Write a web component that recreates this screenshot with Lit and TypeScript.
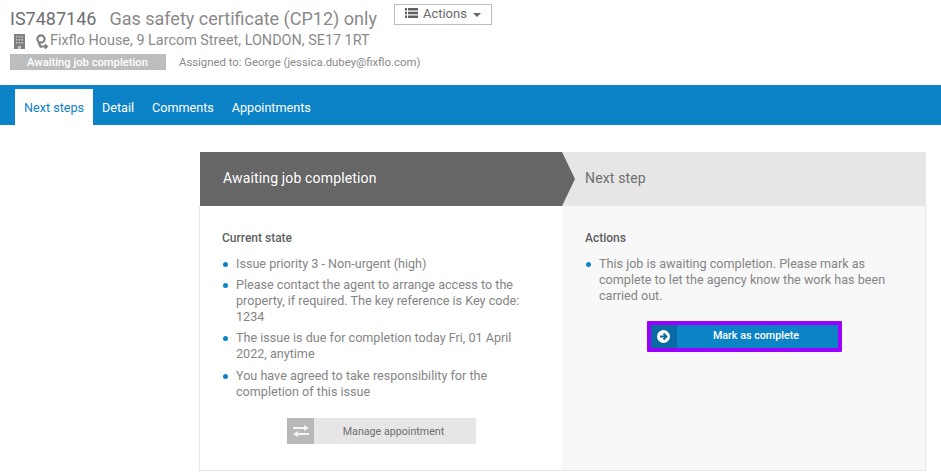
import { LitElement, html, css } from "lit";
import { customElement } from "lit/decorators.js";

@customElement("app-root")
export class AppRoot extends LitElement {
  static styles = css`
    :host { display: block; width: 941px; height: 476px; overflow: hidden; background: #fff; font-family: Roboto, sans-serif; color: #757575; }
    .head { height: 85px; padding: 8px 0 0 10px; box-sizing: border-box; }
    .title-row { display: flex; align-items: flex-start; height: 22px; }
    h1 { margin: 0; font-size: 18px; line-height: 21px; font-weight: 400; color: #8a8a8a; }
    h1 .id { color: #6f6f6f; margin-right: 13px; }
    .actions { margin: -4px 0 0 17px; width: 98px; height: 21px; box-sizing: border-box; border: 1px solid #bdbdbd; display: flex; align-items: center; justify-content: center; font-size: 13px; color: #6a6a6a; padding-bottom: 3px; }
    .actions svg { margin-right: 5px; }
    .caret { width: 0; height: 0; border: 4px solid transparent; border-top-color: #666; border-bottom: 0; margin: 3px 0 0 6px; }
    .addr { display: flex; align-items: center; font-size: 14.4px; line-height: 18px; margin-top: 2px; color: #8a8a8a; padding-left: 4px; }
    .addr .b { margin-right: 10px; }
    .status-row { display: flex; align-items: center; margin-top: 4px; }
    .badge { width: 156px; height: 16px; background: #bdbdbd; color: #fff; font-size: 11.2px; font-weight: 500; line-height: 17px; text-align: center; box-sizing: border-box; padding-right: 1px; }
    .assigned { font-size: 11.35px; color: #8a8a8a; margin-left: 13px; }
    nav { height: 40px; background: #0c82c7; padding: 4px 0 0 15px; box-sizing: border-box; display: flex; }
    nav a { color: #fff; font-size: 12.6px; line-height: 34px; padding: 2px 9px 0; box-sizing: border-box; }
    nav a.on { background: #fff; color: #0c82c7; }
    .main { padding: 27px 15px 0 199px; }
    .steps { display: flex; height: 54px; margin-left: 1px; font-size: 14px; letter-spacing: 0.15px; }
    .s1 { position: relative; width: 362px; background: #666; color: #fff; line-height: 52px; padding-left: 23px; box-sizing: border-box; }
    .s1::after { content: ""; position: absolute; left: 100%; top: 0; border-left: 13px solid #666; border-top: 27px solid transparent; border-bottom: 27px solid transparent; }
    .s2 { flex: 1; background: #e6e6e6; color: #6f6f6f; line-height: 52px; padding-left: 23px; }
    .body { display: grid; grid-template-columns: 362px 1fr; height: 265px; box-sizing: border-box; border: 1px solid #e6e6e6; border-top: 0; font-size: 12.6px; line-height: 16px; }
    .col { padding-top: 24px; box-sizing: border-box; }
    .col.l { padding-left: 22px; padding-right: 30px; }
    .col.r { background: #f8f8f8; padding-left: 23px; padding-right: 30px; }
    h3 { margin: 0 0 10px; font-size: 12px; line-height: 16px; font-weight: 500; color: #5f5f5f; }
    ul { list-style: none; margin: 0; padding: 0; }
    li { position: relative; padding-left: 14px; margin-bottom: 5.2px; color: #858585; }
    li::before { content: ""; position: absolute; left: 1px; top: 6px; width: 5px; height: 5px; border-radius: 50%; background: #0c82c7; }
    .btn { display: flex; align-items: center; box-sizing: border-box; }
    .complete { width: 195px; height: 31px; border: 4px solid #9900ff; border-radius: 1px; background: #0c82c7; color: #fff; font-size: 10.75px; font-weight: 500; margin: 17px 0 0 62px; }
    .complete .ic { width: 26px; height: 100%; box-sizing: border-box; padding: 0 1px 1px 0; background: #0a6aa3; display: flex; align-items: center; justify-content: center; }
    .complete span { flex: 1; text-align: center; padding-right: 3px; padding-bottom: 1px; }
    .manage { width: 189px; height: 26px; background: #e6e6e6; color: #6f6f6f; font-size: 10.7px; margin: 18.4px 0 0 65px; }
    .manage .ic { width: 27px; height: 100%; background: #b8b8b8; display: flex; align-items: center; justify-content: center; }
    .manage span { flex: 1; text-align: center; padding-right: 3px; padding-top: 2px; }
    svg { display: block; }
  `;

  render() {
    return html`
      <div class="head">
        <div class="title-row">
          <h1><span class="id">IS7487146</span>Gas safety certificate (CP12) only</h1>
          <div class="actions">
            <svg width="13" height="10" viewBox="0 0 13 10" fill="#5f5f5f"><rect x="0" y="0" width="2" height="2.500"/><rect x="3" y="0" width="10" height="2.500"/><rect x="0" y="3.750" width="2" height="2.500"/><rect x="3" y="3.750" width="10" height="2.500"/><rect x="0" y="7.500" width="2" height="2.500"/><rect x="3" y="7.500" width="10" height="2.500"/></svg>
            Actions<i class="caret"></i>
          </div>
        </div>
        <div class="addr">
          <svg class="b" width="11" height="15" viewBox="0 0 11 15"><rect width="11" height="15" fill="#808080"/><g fill="#c8c8c8"><rect x="2" y="2" width="1.500" height="1.500"/><rect x="4.800" y="2" width="1.500" height="1.500"/><rect x="7.500" y="2" width="1.500" height="1.500"/><rect x="2" y="5" width="1.500" height="1.500"/><rect x="4.800" y="5" width="1.500" height="1.500"/><rect x="7.500" y="5" width="1.500" height="1.500"/><rect x="2" y="8" width="1.500" height="1.500"/><rect x="4.800" y="8" width="1.500" height="1.500"/><rect x="7.500" y="8" width="1.500" height="1.500"/></g><rect x="4" y="12" width="3" height="3" fill="#c8c8c8"/></svg>
          <svg class="p" width="15" height="15" viewBox="0 0 15 15" fill="none"><circle cx="6" cy="5" r="3.600" stroke="#808080" stroke-width="2.200"/><path d="M3.500 8.500 6 13.500" stroke="#808080" stroke-width="2.200"/><path d="M6 12.500h6M9.800 10.300l2.400 2.200-2.400 2.200" stroke="#808080" stroke-width="1.800"/></svg>
          Fixflo House, 9 Larcom Street, LONDON, SE17 1RT
        </div>
        <div class="status-row">
          <div class="badge">Awaiting job completion</div>
          <div class="assigned">Assigned to: George (jessica.dubey@fixflo.com)</div>
        </div>
      </div>
      <nav>
        <a class="on">Next steps</a><a>Detail</a><a>Comments</a><a>Appointments</a>
      </nav>
      <div class="main">
        <div class="steps">
          <div class="s1">Awaiting job completion</div>
          <div class="s2">Next step</div>
        </div>
        <div class="body">
          <div class="col l">
            <h3>Current state</h3>
            <ul>
              <li>Issue priority 3 - Non-urgent (high)</li>
              <li>Please contact the agent to arrange access to the property, if required. The key reference is Key code: 1234</li>
              <li>The issue is due for completion today Fri, 01 April 2022, anytime</li>
              <li>You have agreed to take responsibility for the completion of this issue</li>
            </ul>
            <div class="btn manage">
              <div class="ic"><svg width="16" height="12" viewBox="0 0 16 12" fill="#f4f4f4"><path d="M0 2h11V0l5 3-5 3V4H0z"/><path d="M16 10H5v2L0 9l5-3v2h11z"/></svg></div>
              <span>Manage appointment</span>
            </div>
          </div>
          <div class="col r">
            <h3>Actions</h3>
            <ul>
              <li>This job is awaiting completion. Please mark as complete to let the agency know the work has been carried out.</li>
            </ul>
            <div class="btn complete">
              <div class="ic"><svg width="13" height="13" viewBox="0 0 13 13"><circle cx="6.500" cy="6.500" r="6.500" fill="#fff"/><path d="M3 6.500h6M6.500 3.500l3 3-3 3" stroke="#0a6aa3" stroke-width="1.800" fill="none"/></svg></div>
              <span>Mark as complete</span>
            </div>
          </div>
        </div>
      </div>
    `;
  }
}
